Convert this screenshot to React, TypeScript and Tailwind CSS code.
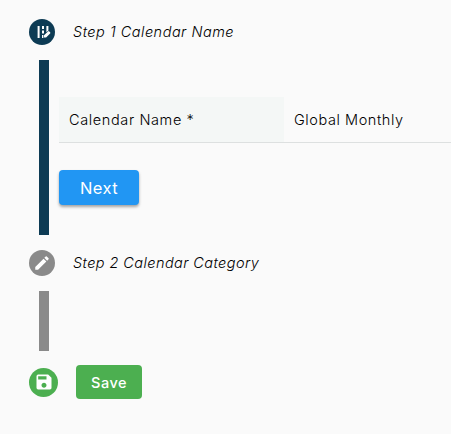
import type { ReactNode } from "react";
import { MdEdit, MdSave } from "react-icons/md";

function RoadIcon() {
  return (
    <svg className="ml-[3px]" width="16" height="16" viewBox="0 0 16 16" fill="currentColor">
      <path d="M1.6 2h2v12h-2zM6 2h2v3H6zM6 6.5h2v3H6zM6 11h1.4v3H6zM10.4 2h2v4.4l-2 1.9z" />
      <path d="M8 11.3 12 7.4q.7-.6 1.3 0l.8.8q.6.7 0 1.3L10.1 13.5H8z" />
    </svg>
  );
}

function StepHeader({ icon, title, color, spacing }: { icon: ReactNode; title: string; color: string; spacing: string }) {
  return (
    <div className="flex h-[26px] items-center pl-[29px]">
      <span className={`flex size-[26px] shrink-0 items-center justify-center rounded-full text-white ${color}`}>{icon}</span>
      <span className={`ml-[18px] whitespace-nowrap text-[14.5px] font-light italic ${spacing}`}>{title}</span>
    </div>
  );
}

export default function App() {
  return (
    <main className="h-[434px] w-[451px] overflow-hidden bg-[#fafafa] pt-[19px] font-['Inter',sans-serif] text-[14.5px] font-light text-black">
      <StepHeader icon={<RoadIcon />} title="Step 1 Calendar Name" color="bg-[#0d3b54]" spacing="tracking-[0.5px]" />
      <section className="mt-[15px] flex h-[175px] pl-[39px]">
        <div className="w-2.5 shrink-0 bg-[#0d3b54]" />
        <div className="ml-2.5 flex-1 pt-[37px]">
          <div className="flex h-[46px] items-center border-b border-[#dde0e0]">
            <div className="flex h-full w-[225px] shrink-0 items-center bg-[#f4f7f6] pl-2.5 tracking-[0.62px]">Calendar Name *</div>
            <div className="pl-2.5 tracking-[0.57px]">Global Monthly</div>
          </div>
          <button className="mt-[26.5px] flex h-[35px] w-20 items-center justify-center rounded-[4px] bg-[#2196f3] pt-[3px] text-[16.5px] font-normal tracking-[0.4px] text-white shadow-[0_2px_3px_rgba(0,0,0,0.35)]">Next</button>
        </div>
      </section>
      <div className="mt-[15px]">
        <StepHeader icon={<MdEdit size={18} />} title="Step 2 Calendar Category" color="bg-[#8a8a8a]" spacing="tracking-[0.42px]" />
      </div>
      <div className="mt-[14.5px] ml-[39px] h-[60px] w-2.5 bg-[#8a8a8a]" />
      <div className="mt-[14.5px] flex items-center pl-[29px]">
        <span className="flex size-[29px] items-center justify-center rounded-full bg-[#4caf50] text-white"><MdSave size={20} /></span>
        <button className="ml-[18px] h-[34px] w-[66px] rounded-[4px] bg-[#4caf50] pt-px text-[14.5px] font-medium tracking-[0.5px] text-white">Save</button>
      </div>
    </main>
  );
}
